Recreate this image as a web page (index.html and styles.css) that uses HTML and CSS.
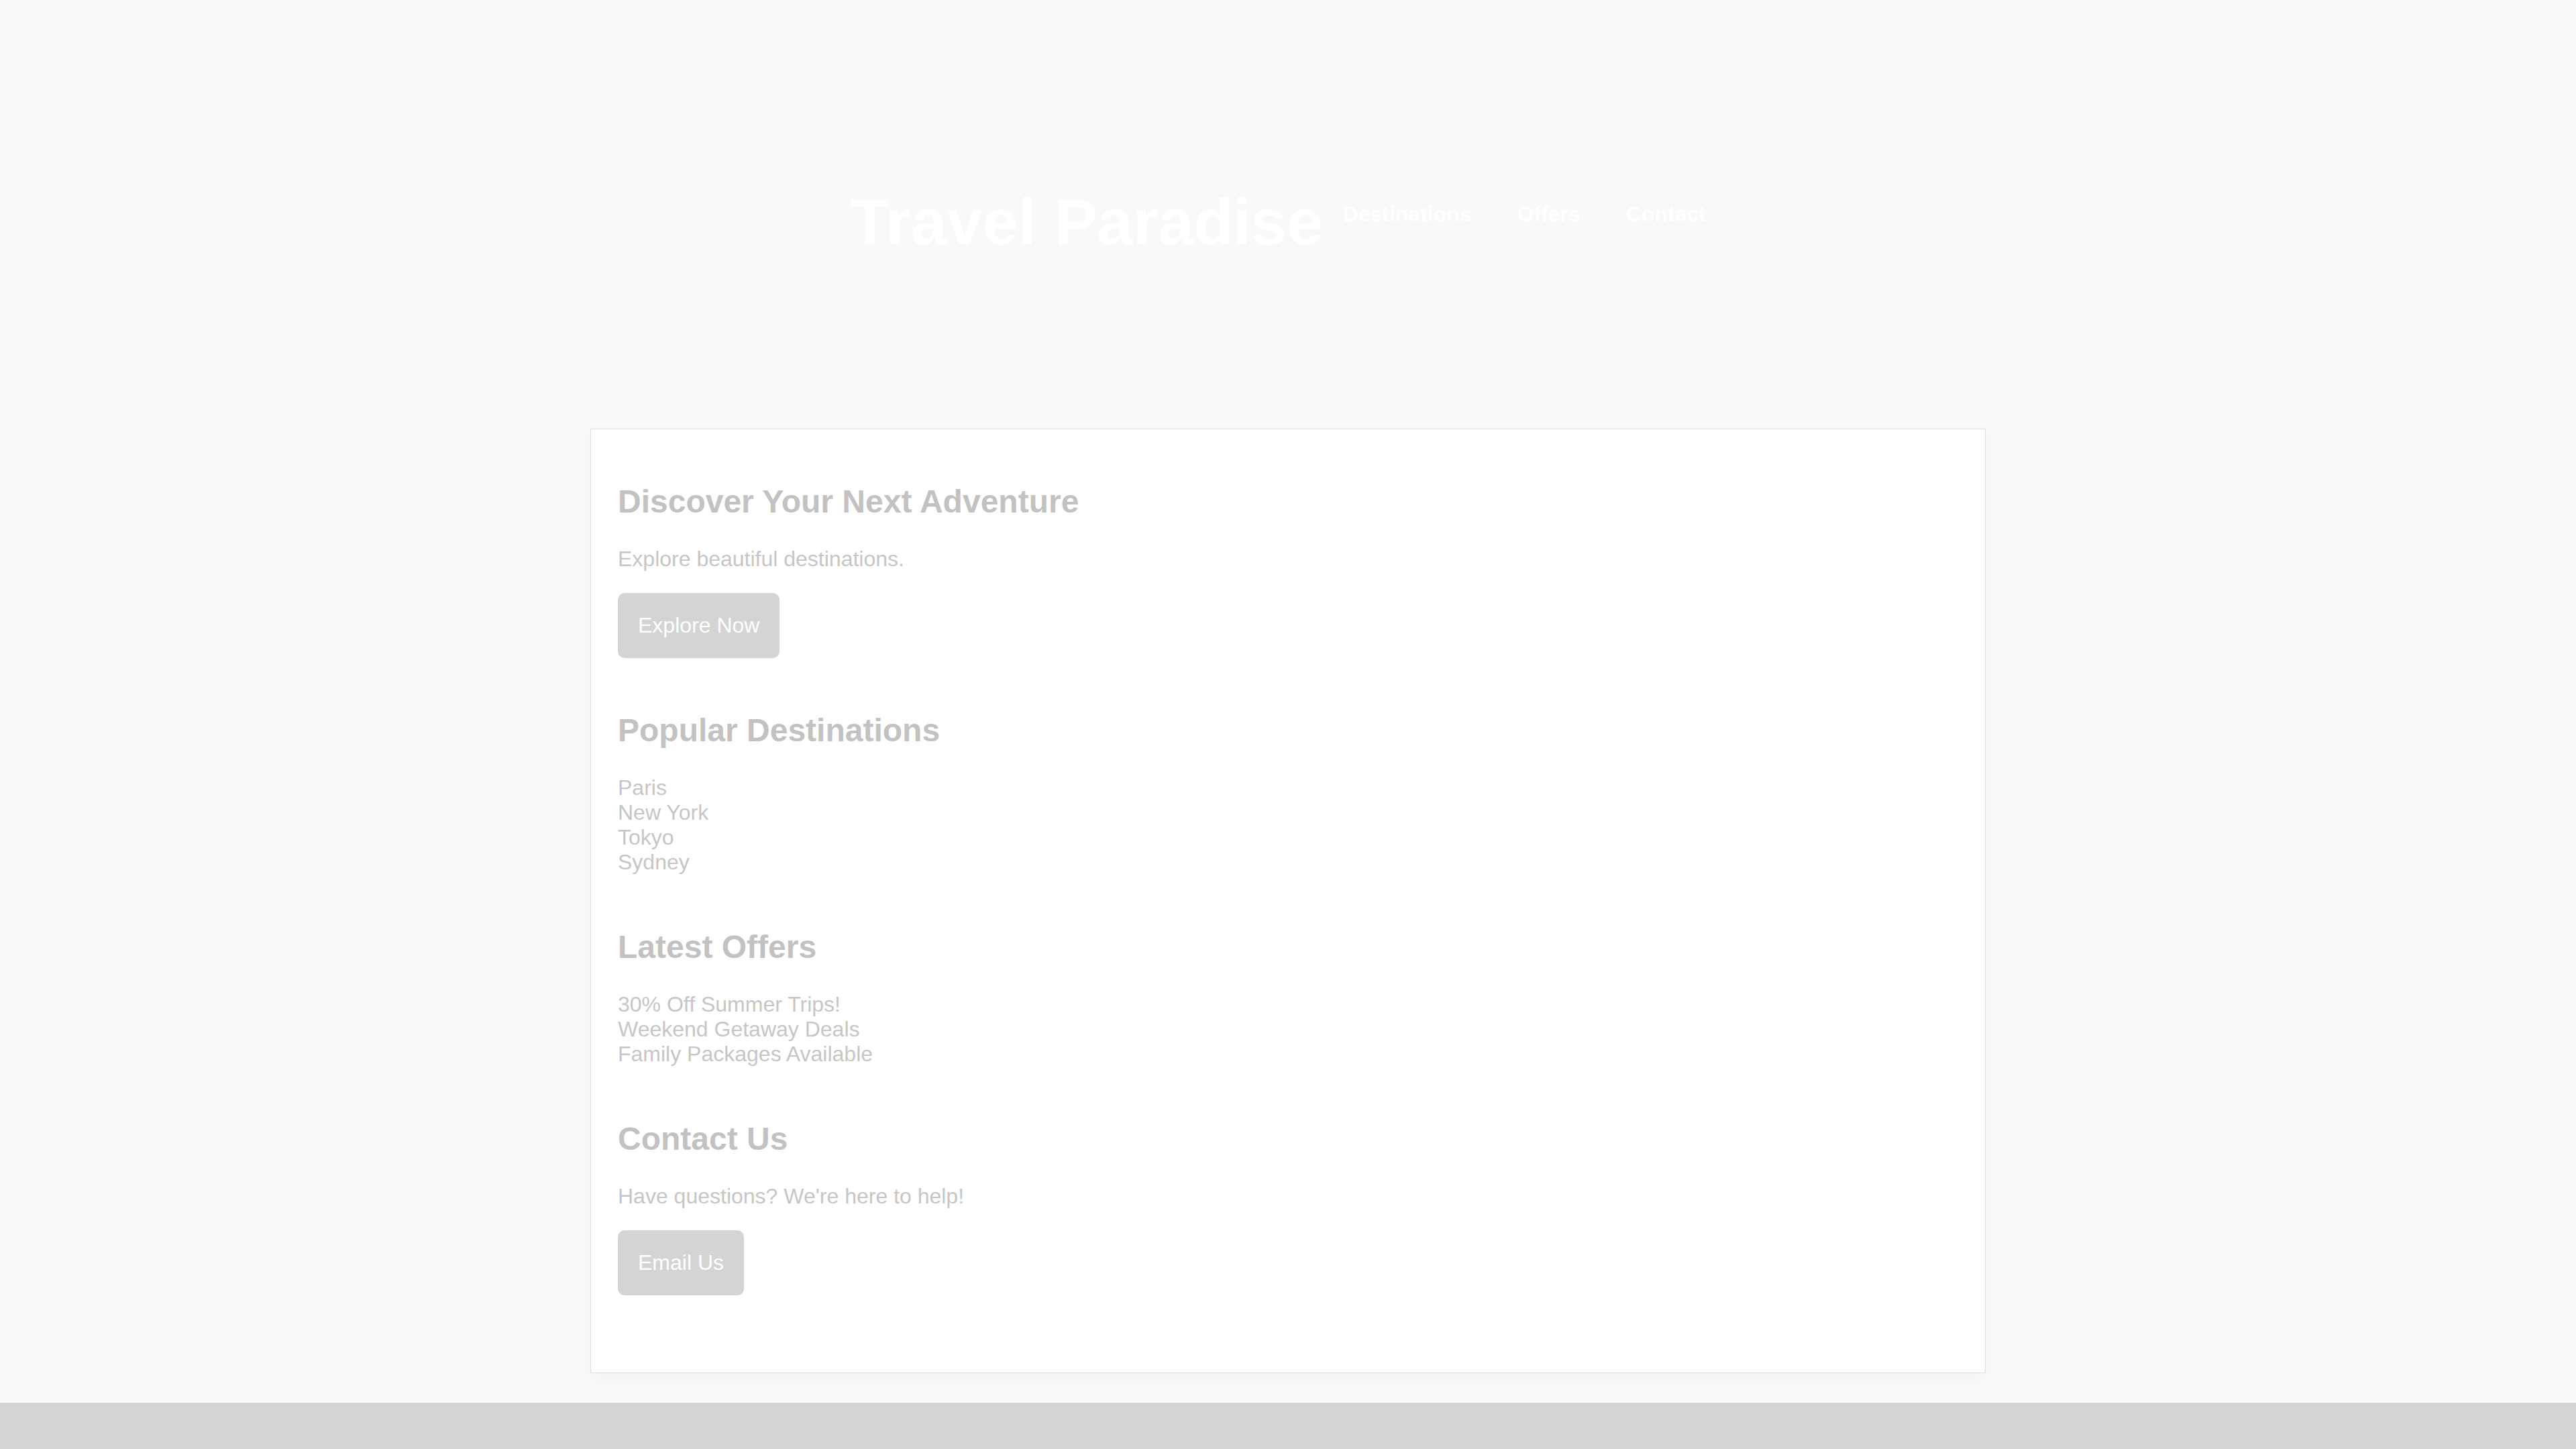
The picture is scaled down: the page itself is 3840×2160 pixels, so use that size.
FILE: index.html
```html
<!DOCTYPE html>
<html lang="en">
<head>
<meta charset="utf-8">
<title>Travel Paradise</title>
<link rel="stylesheet" href="styles.css">
</head>
<body>
<header class="site-header">
  <h1 class="site-title">Travel Paradise</h1>
  <nav class="site-nav">
    <a class="nav-link" href="#destinations">Destinations</a>
    <a class="nav-link" href="#offers">Offers</a>
    <a class="nav-link" href="#contact">Contact</a>
  </nav>
</header>
<main class="card">
  <section class="section">
    <h2 class="section-title">Discover Your Next Adventure</h2>
    <p class="section-text">Explore beautiful destinations.</p>
    <div><button class="btn">Explore Now</button></div>
  </section>
  <section class="section" id="destinations">
    <h2 class="section-title">Popular Destinations</h2>
    <ul class="plain-list">
      <li>Paris</li>
      <li>New York</li>
      <li>Tokyo</li>
      <li>Sydney</li>
    </ul>
  </section>
  <section class="section" id="offers">
    <h2 class="section-title">Latest Offers</h2>
    <ul class="plain-list">
      <li>30% Off Summer Trips!</li>
      <li>Weekend Getaway Deals</li>
      <li>Family Packages Available</li>
    </ul>
  </section>
  <section class="section" id="contact">
    <h2 class="section-title">Contact Us</h2>
    <p class="section-text">Have questions? We're here to help!</p>
    <div><button class="btn">Email Us</button></div>
  </section>
</main>
<footer class="site-footer"></footer>
</body>
</html>
```

FILE: styles.css
```css
html, body {
  margin: 0;
  padding: 0;
}

body {
  background: #f9f9f9;
  font-family: "Liberation Sans", Arial, sans-serif;
  font-size: 32px;
  color: #c8c8c8;
}

.site-header {
  display: flex;
  justify-content: center;
  align-items: flex-start;
  padding: 276px 0 253px;
}

.site-title {
  margin: 0;
  font-size: 96px;
  font-weight: bold;
  color: #ffffff;
}

.site-nav {
  display: flex;
  gap: 8px;
  margin-top: 25px;
}

.nav-link {
  margin: 0 30px;
  color: #ffffff;
  font-weight: bold;
  font-size: 32px;
  text-decoration: none;
}

.card {
  box-sizing: border-box;
  width: 2080px;
  margin: 0 auto 44px;
  padding: 40px 40px 75px;
  background: #ffffff;
  border: 1px solid #dedede;
  box-shadow: 0 8px 20px rgba(0, 0, 0, 0.025);
  display: flex;
  flex-direction: column;
}

.section {
  margin-bottom: 40px;
}

.section-title {
  margin: 40px 0;
  font-size: 48px;
  font-weight: bold;
  color: #c2c2c2;
}

.section-text {
  margin: 0 0 32px;
  color: #c6c6c6;
}

.plain-list {
  list-style: none;
  margin: 0;
  padding: 0;
  color: #c6c6c6;
}

.btn {
  font-family: "Liberation Sans", Arial, sans-serif;
  font-size: 32px;
  color: #ffffff;
  background: #d4d4d4;
  border: none;
  border-radius: 10px;
  padding: 30px;
  line-height: normal;
}

.site-footer {
  height: 70px;
  background: #d4d4d4;
}
```
